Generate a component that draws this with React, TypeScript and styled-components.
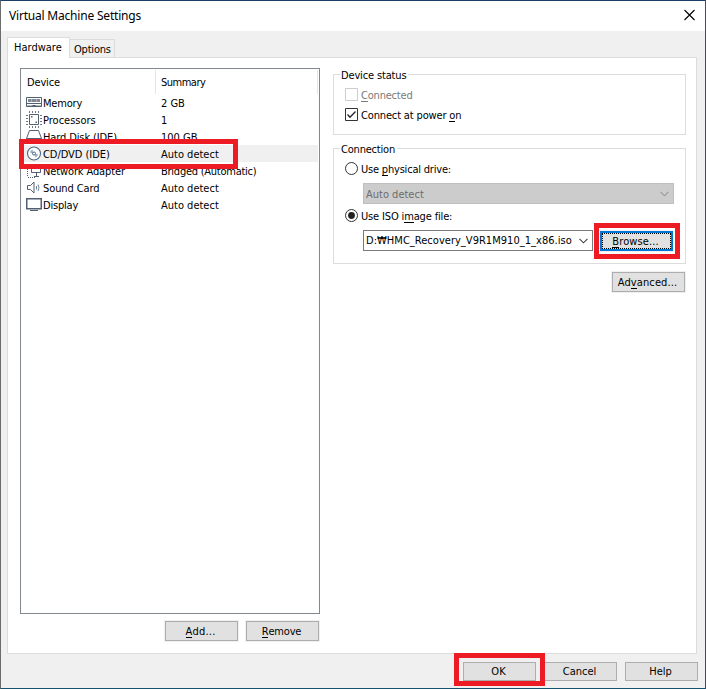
import React from "react";
import styled, { createGlobalStyle } from "styled-components";

const GlobalStyle = createGlobalStyle`
  *, *::before, *::after { box-sizing: border-box; }
  body {
    margin: 0;
    background: #fff;
    color: #000;
    font-family: "DejaVu Sans Condensed", "DejaVu Sans", "Noto Sans CJK KR", sans-serif;
    font-stretch: condensed;
    font-size: 11px;
    line-height: 17px;
    overflow: hidden;
  }
`;

const Window = styled.div`
  position: relative;
  width: 706px;
  height: 689px;
  display: flex;
  flex-direction: column;
  background: #f0f0f0;
  border-top: 1px solid #1a4066;
  border-bottom: 1px solid #155270;
  border-left: 1px solid #6c6c6e;
  border-right: 1px solid #4c4c50;
`;

const TitleBar = styled.header`
  height: 30px;
  flex: none;
  display: flex;
  align-items: center;
  justify-content: space-between;
  padding: 0 9px 2px 8px;
  background: #fff;
  font-family: "Noto Sans", sans-serif;
  font-stretch: normal;
  font-size: 12px;
`;

const Text = styled.span<{ $ls?: number }>`
  white-space: pre;
  letter-spacing: ${(p) => p.$ls ?? 0}px;
`;

const Key = styled.span`
  box-shadow: 0 -1px 0 currentColor inset;
  display: inline-block;
  height: 13px;
  line-height: 13px;
`;

const TabStrip = styled.nav`
  display: flex;
  align-items: flex-end;
  height: 26px;
  padding: 0 6px;
  flex: none;
`;

const Tab = styled.div<{ $active?: boolean }>`
  width: ${(p) => (p.$active ? 63 : 45)}px;
  height: ${(p) => (p.$active ? 21 : 18)}px;
  margin-bottom: ${(p) => (p.$active ? -1 : 0)}px;
  padding: ${(p) => (p.$active ? "1px 0 0 6px" : "1px 0 0 4px")};
  border: 1px solid #dcdcdc;
  border-bottom: 0;
  border-left-width: ${(p) => (p.$active ? 1 : 0)}px;
  background: ${(p) => (p.$active ? "#fff" : "#f0f0f0")};
  z-index: ${(p) => (p.$active ? 1 : 0)};
`;

const Page = styled.main`
  width: 690px;
  height: 597px;
  margin-left: 6px;
  flex: none;
  display: flex;
  gap: 13px;
  padding: 10px 10px 0 12px;
  border: 1px solid #dcdcdc;
  background: #fff;
`;

const DeviceColumn = styled.section`
  width: 300px;
  flex: none;
`;

const List = styled.div`
  height: 546px;
  padding: 0 1px;
  border: 1px solid #828790;
`;

const ListHeader = styled.div`
  display: flex;
  height: 25px;
  padding-top: 1px;
`;

const HeadCell = styled.div<{ $w: number }>`
  width: ${(p) => p.$w}px;
  height: 24px;
  padding: 4px 0 0 5px;
  border-right: 1px solid #e5e5e5;
`;

const Row = styled.div<{ $selected?: boolean }>`
  display: flex;
  height: 17px;
  margin-left: 2px;
  line-height: 19px;
  background: ${(p) => (p.$selected ? "#f0f0f0" : "transparent")};
`;

const Icon = styled.svg`
  display: block;
  width: 17px;
  height: 17px;
  margin: 0 0 0 2px;
  flex: none;
  overflow: visible;
`;

const DeviceName = styled.div`
  width: 118px;
  flex: none;
`;

const ButtonRow = styled.div<{ $top: number }>`
  display: flex;
  justify-content: flex-end;
  gap: 8px;
  margin-top: ${(p) => p.$top}px;
  padding-right: 1px;
`;

const Footer = styled(ButtonRow)`
  padding-right: 7px;
`;

const Button = styled.button<{ $focus?: boolean; $h?: number }>`
  width: 73px;
  height: ${(p) => p.$h ?? 20}px;
  flex: none;
  padding: 0 2px 0 0;
  display: flex;
  align-items: center;
  justify-content: center;
  border: ${(p) => (p.$focus ? "2px solid #0078d7" : "1px solid #adadad")};
  outline: ${(p) => (p.$focus ? "1px dotted #000" : "none")};
  outline-offset: -3px;
  box-shadow: 0 0 0 1px #f0f0f0;
  background: #e1e1e1;
  color: #000;
  font: inherit;
`;

const Settings = styled.section`
  width: 353px;
  padding-top: 6px;
`;

const Group = styled.div<{ $h: number; $gap: number }>`
  height: ${(p) => p.$h}px;
  margin-bottom: ${(p) => p.$gap}px;
  padding-left: 11px;
  border: 1px solid #dcdcdc;
`;

const Legend = styled.div`
  width: max-content;
  height: 13px;
  line-height: 15px;
  margin: -7px 0 0 -5px;
  padding: 0 2px 0 1px;
  background: #fff;
`;

const Option = styled.label<{ $top: number; $disabled?: boolean }>`
  display: flex;
  gap: 3px;
  height: 13px;
  margin-top: ${(p) => p.$top}px;
  line-height: 15px;
  color: ${(p) => (p.$disabled ? "#7a7a7a" : "#000")};
`;

const Mark = styled.svg`
  width: 13px;
  height: 13px;
  flex: none;
`;

const Combo = styled.div<{ $w: number; $disabled?: boolean }>`
  width: ${(p) => p.$w}px;
  height: 21px;
  flex: none;
  display: flex;
  align-items: center;
  justify-content: space-between;
  padding: ${(p) => (p.$disabled ? "1px" : "0")} 4px 0 2px;
  border: 1px solid ${(p) => (p.$disabled ? "#bfbfbf" : "#7a7a7a")};
  background: ${(p) => (p.$disabled ? "#cccccc" : "#fff")};
  color: ${(p) => (p.$disabled ? "#6d6d6d" : "#000")};
`;

const ComboLine = styled.div<{ $top: number }>`
  display: flex;
  align-items: flex-end;
  gap: 7px;
  margin: ${(p) => p.$top}px 0 0 18px;
`;

const Highlight = styled.div<{ $x: number; $y: number; $w: number; $h: number }>`
  position: absolute;
  left: ${(p) => p.$x - 1}px;
  top: ${(p) => p.$y - 1}px;
  width: ${(p) => p.$w}px;
  height: ${(p) => p.$h}px;
  border: 5px solid #ed1c24;
  pointer-events: none;
  z-index: 2;
`;

const ink = "#53606f";

const glyphs: Record<string, React.ReactNode> = {
  memory: (
    <>
      <path d="M.5 3.500h15v9H.5z" fill="#fff" stroke={ink} />
      <path d="M2 5h12v3H2z" fill="#7e8995" />
      <path d="M5.500 5v3M10.500 5v3" stroke="#a9b1ba" />
      <path d="M0 9.500h16" stroke={ink} />
      <path d="M1 11.500h5M10 11.500h5" stroke="#b4bbc3" />
      <path d="M6.500 12.500v-1h3v1" fill="none" stroke={ink} />
    </>
  ),
  cpu: (
    <>
      <path
        d="M3.500 0v2M6.500 0v2M9.500 0v2M12.500 0v2M3.500 15v2M6.500 15v2M9.500 15v2M12.500 15v2M0 4.500h2M0 7.500h2M0 10.500h2M0 13.500h2M14 4.500h2M14 7.500h2M14 10.500h2M14 13.500h2"
        stroke="#6c7784"
      />
      <path d="M3.500 3.500h9v10h-9z" fill="#fff" stroke={ink} />
      <path d="M5 5h1.500v1.500H5zM9.500 10.500H11V12H9.500z" fill={ink} />
    </>
  ),
  disk: (
    <path d="M.5 10.500 3.500 2.500h9l3 8v4H.5zM.5 10.500h15" fill="none" stroke={ink} />
  ),
  disc: (
    <>
      <circle cx="8" cy="8.500" r="6.500" fill="#fff" stroke="#496882" strokeWidth="1.100" />
      <path d="M7 9 3.800 7.200A4.500 4.500 0 0 1 6.800 4.400zM9 8l3.200 1.800A4.500 4.500 0 0 1 9.200 12.600z" fill="#9db4c4" />
      <circle cx="8" cy="8.500" r="1.500" fill="#fff" stroke="#496882" />
    </>
  ),
  network: (
    <>
      <path d="M5.500 2.500h9v8h-9zM8 14.500h5M10.500 11v3" fill="none" stroke={ink} />
      <path d="M1.500 5v10M2 15.500h8" fill="none" stroke={ink} strokeDasharray="1 1" />
      <path d="M1 3.500h7" stroke={ink} strokeWidth="2" />
    </>
  ),
  sound: (
    <>
      <path d="M1.500 6.500h3l3.500-3.500v11l-3.500-3.500h-3z" fill="none" stroke={ink} />
      <path d="M10.500 7v3.500M12 5.500Q14 8.500 12 12" fill="none" stroke="#718498" />
    </>
  ),
  display: (
    <>
      <path d="M.75 2.750h14.500v10H.75z" fill="#fff" stroke={ink} strokeWidth="1.500" />
      <path d="M4 14.500h8" stroke={ink} />
    </>
  ),
};

const devices = [
  { icon: "memory", name: "Memory", summary: "2 GB", ls: -0.2 },
  { icon: "cpu", name: "Processors", summary: "1" },
  { icon: "disk", name: "Hard Disk (IDE)", summary: "100 GB", ls: -0.12 },
  { icon: "disc", name: "CD/DVD (IDE)", summary: "Auto detect", selected: true, ls: -0.05 },
  { icon: "network", name: "Network Adapter", summary: "Bridged (Automatic)", ls: -0.12, sls: -0.25 },
  { icon: "sound", name: "Sound Card", summary: "Auto detect", ls: -0.1 },
  { icon: "display", name: "Display", summary: "Auto detect", ls: -0.2 },
];

const Chevron = ({ color }: { color: string }) => (
  <svg width="9" height="6" viewBox="0 0 9 6">
    <path d="M.5.800 4.500 4.800 8.500.800" fill="none" stroke={color} strokeWidth="1.100" />
  </svg>
);

const CheckMark = ({ on }: { on?: boolean }) => (
  <Mark viewBox="0 0 13 13">
    <path d="M.5.500h12v12H.5z" fill="#fff" stroke={on ? "#333" : "#ccc"} />
    {on && <path d="M2.500 6.500 5 9.200 10.500 3.500" fill="none" stroke="#222" strokeWidth="1.300" />}
  </Mark>
);

const RadioMark = ({ on }: { on?: boolean }) => (
  <Mark viewBox="0 0 13 13">
    <circle cx="6.500" cy="6.500" r="6" fill="#fff" stroke="#333" />
    {on && <circle cx="6.500" cy="6.500" r="3.400" fill="#222" />}
  </Mark>
);

export default function App() {
  return (
    <>
      <GlobalStyle />
      <Window>
        <TitleBar>
          <Text $ls={-0.2}>Virtual Machine Settings</Text>
          <svg width="13" height="12" viewBox="0 0 13 12">
            <path d="m1.500 1 10 10m0-10-10 10" stroke="#000" strokeWidth="1.100" />
          </svg>
        </TitleBar>
        <TabStrip>
          <Tab $active><Text>Hardware</Text></Tab>
          <Tab><Text $ls={-0.2}>Options</Text></Tab>
        </TabStrip>
        <Page>
          <DeviceColumn>
            <List>
              <ListHeader>
                <HeadCell $w={134}><Text $ls={-0.15}>Device</Text></HeadCell>
                <HeadCell $w={162}><Text $ls={-0.5}>Summary</Text></HeadCell>
              </ListHeader>
              {devices.map((d) => (
                <Row key={d.name} $selected={d.selected}>
                  <Icon viewBox="0 0 17 17">{glyphs[d.icon]}</Icon>
                  <DeviceName><Text $ls={d.ls}>{d.name}</Text></DeviceName>
                  <Text $ls={d.sls}>{d.summary}</Text>
                </Row>
              ))}
            </List>
            <ButtonRow $top={7}>
              <Button><Text $ls={0.2}><Key>A</Key>dd...</Text></Button>
              <Button><Text $ls={-0.2}><Key>R</Key>emove</Text></Button>
            </ButtonRow>
          </DeviceColumn>
          <Settings>
            <Group $h={61} $gap={13}>
              <Legend><Text $ls={-0.15}>Device status</Text></Legend>
              <Option $top={7} $disabled>
                <CheckMark />
                <Text $ls={-0.2}><Key>C</Key>onnected</Text>
              </Option>
              <Option $top={7}>
                <CheckMark on />
                <Text $ls={-0.15}>Connect at power <Key>o</Key>n</Text>
              </Option>
            </Group>
            <Group $h={116} $gap={8}>
              <Legend><Text $ls={-0.2}>Connection</Text></Legend>
              <Option $top={7}>
                <RadioMark />
                <Text $ls={-0.2}>Use <Key>p</Key>hysical drive:</Text>
              </Option>
              <ComboLine $top={8}>
                <Combo $w={311} $disabled>
                  <Text>Auto detect</Text>
                  <Chevron color="#9a9a9a" />
                </Combo>
              </ComboLine>
              <Option $top={5}>
                <RadioMark on />
                <Text $ls={-0.15}>Use ISO i<Key>m</Key>age file:</Text>
              </Option>
              <ComboLine $top={8}>
                <Combo $w={230}>
                  <Text $ls={0.03}>D:₩HMC_Recovery_V9R1M910_1_x86.iso</Text>
                  <Chevron color="#444" />
                </Combo>
                <Button $focus><Text $ls={0.1}><Key>B</Key>rowse...</Text></Button>
              </ComboLine>
            </Group>
            <ButtonRow $top={0}>
              <Button><Text $ls={0.1}>Ad<Key>v</Key>anced...</Text></Button>
            </ButtonRow>
          </Settings>
        </Page>
        <Footer $top={8}>
          <Button $h={19}><Text>OK</Text></Button>
          <Button $h={19}><Text>Cancel</Text></Button>
          <Button $h={19}><Text>Help</Text></Button>
        </Footer>
        <Highlight $x={19} $y={139} $w={219} $h={30} />
        <Highlight $x={594} $y={223} $w={86} $h={36} />
        <Highlight $x={454} $y={653} $w={91} $h={33} />
      </Window>
    </>
  );
}
